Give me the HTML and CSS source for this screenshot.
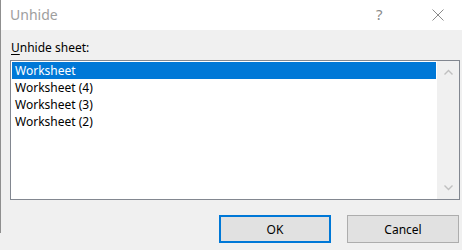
FILE: index.html
```html
<!DOCTYPE html>
<html>
<head>
<meta charset="utf-8">
<link rel="stylesheet" href="styles.css">
</head>
<body>
<div class="window">
  <div class="titlebar">
    <span class="title">Unhide</span>
    <span class="help">?</span>
    <span class="close">
      <svg width="12" height="12" viewBox="0 0 12 12"><path d="M0.5 0.5 L11.5 11.5 M11.5 0.5 L0.5 11.5" stroke="#8a8a8a" stroke-width="1" fill="none"/></svg>
    </span>
  </div>
  <div class="content">
    <div class="label"><u>U</u>nhide sheet:</div>
    <div class="listbox">
      <ul class="items">
        <li class="item selected">Worksheet</li>
        <li class="item">Worksheet (4)</li>
        <li class="item">Worksheet (3)</li>
        <li class="item">Worksheet (2)</li>
      </ul>
      <div class="scrollbar">
        <svg class="arrow" width="9" height="6" viewBox="0 0 9 6"><path d="M0.5 5.5 L4.5 1.5 L8.5 5.5" stroke="#c0c0c0" stroke-width="1.4" fill="none"/></svg>
        <svg class="arrow" width="9" height="6" viewBox="0 0 9 6"><path d="M0.5 0.5 L4.5 4.5 L8.5 0.5" stroke="#c0c0c0" stroke-width="1.4" fill="none"/></svg>
      </div>
    </div>
    <div class="buttons">
      <button class="btn btn-default">OK</button>
      <button class="btn">Cancel</button>
    </div>
  </div>
</div>
</body>
</html>
```
FILE: styles.css
```css
html, body {
  margin: 0;
  padding: 0;
  background: #f0f0f0;
}
.window {
  width: 462px;
  height: 250px;
  box-sizing: border-box;
  background: linear-gradient(#8f8f8f, #8f8f8f) left top / 1px 233px no-repeat, #f0f0f0;
  font-family: "Noto Sans", "Open Sans", sans-serif;
  font-size: 12px;
  color: #000;
  display: flex;
  flex-direction: column;
}
.titlebar {
  height: 30px;
  margin-left: 1px;
  background: #fff;
  display: flex;
  align-items: center;
  padding-left: 9px;
}
.title {
  font-size: 14px;
  color: #9e9e9e;
  flex: 1;
  margin-top: -1px;
}
.help {
  font-size: 15px;
  color: #8a8a8a;
  width: 8px;
  margin-right: 48px;
  margin-top: -2px;
}
.close {
  display: flex;
  width: 12px;
  height: 12px;
  margin-right: 18px;
  margin-top: -1px;
}
.content {
  flex: 1;
  padding: 10px 2px 0 10px;
  display: flex;
  flex-direction: column;
}
.label {
  line-height: 16px;
  margin-left: 1px;
  margin-bottom: 4px;
}
.label u {
  text-decoration-thickness: 1px;
  text-underline-offset: 2px;
}
.listbox {
  height: 140px;
  box-sizing: border-box;
  border: 1px solid #828790;
  background: #fff;
  display: flex;
}
.items {
  list-style: none;
  margin: 0;
  padding: 1px 1px 0 1px;
  flex: 1;
}
.item {
  height: 17px;
  line-height: 17px;
  padding-left: 3px;
  white-space: nowrap;
}
.item.selected {
  background: #0078d7;
  color: #fff;
}
.scrollbar {
  width: 22px;
  background: #f0f0f0;
  display: flex;
  flex-direction: column;
  justify-content: space-between;
  align-items: center;
  padding: 8px 0 8px 0;
  box-sizing: border-box;
}
.buttons {
  display: flex;
  justify-content: flex-end;
  gap: 16px;
  margin-top: 15px;
  padding-right: 1px;
}
.btn {
  width: 112px;
  height: 28px;
  box-sizing: border-box;
  border: 1px solid #adadad;
  background: #e1e1e1;
  font-family: "Noto Sans", "Open Sans", sans-serif;
  font-size: 12px;
  color: #000;
  padding: 0;
  margin: 0;
}
.btn-default {
  border: 2px solid #0078d7;
}
```
